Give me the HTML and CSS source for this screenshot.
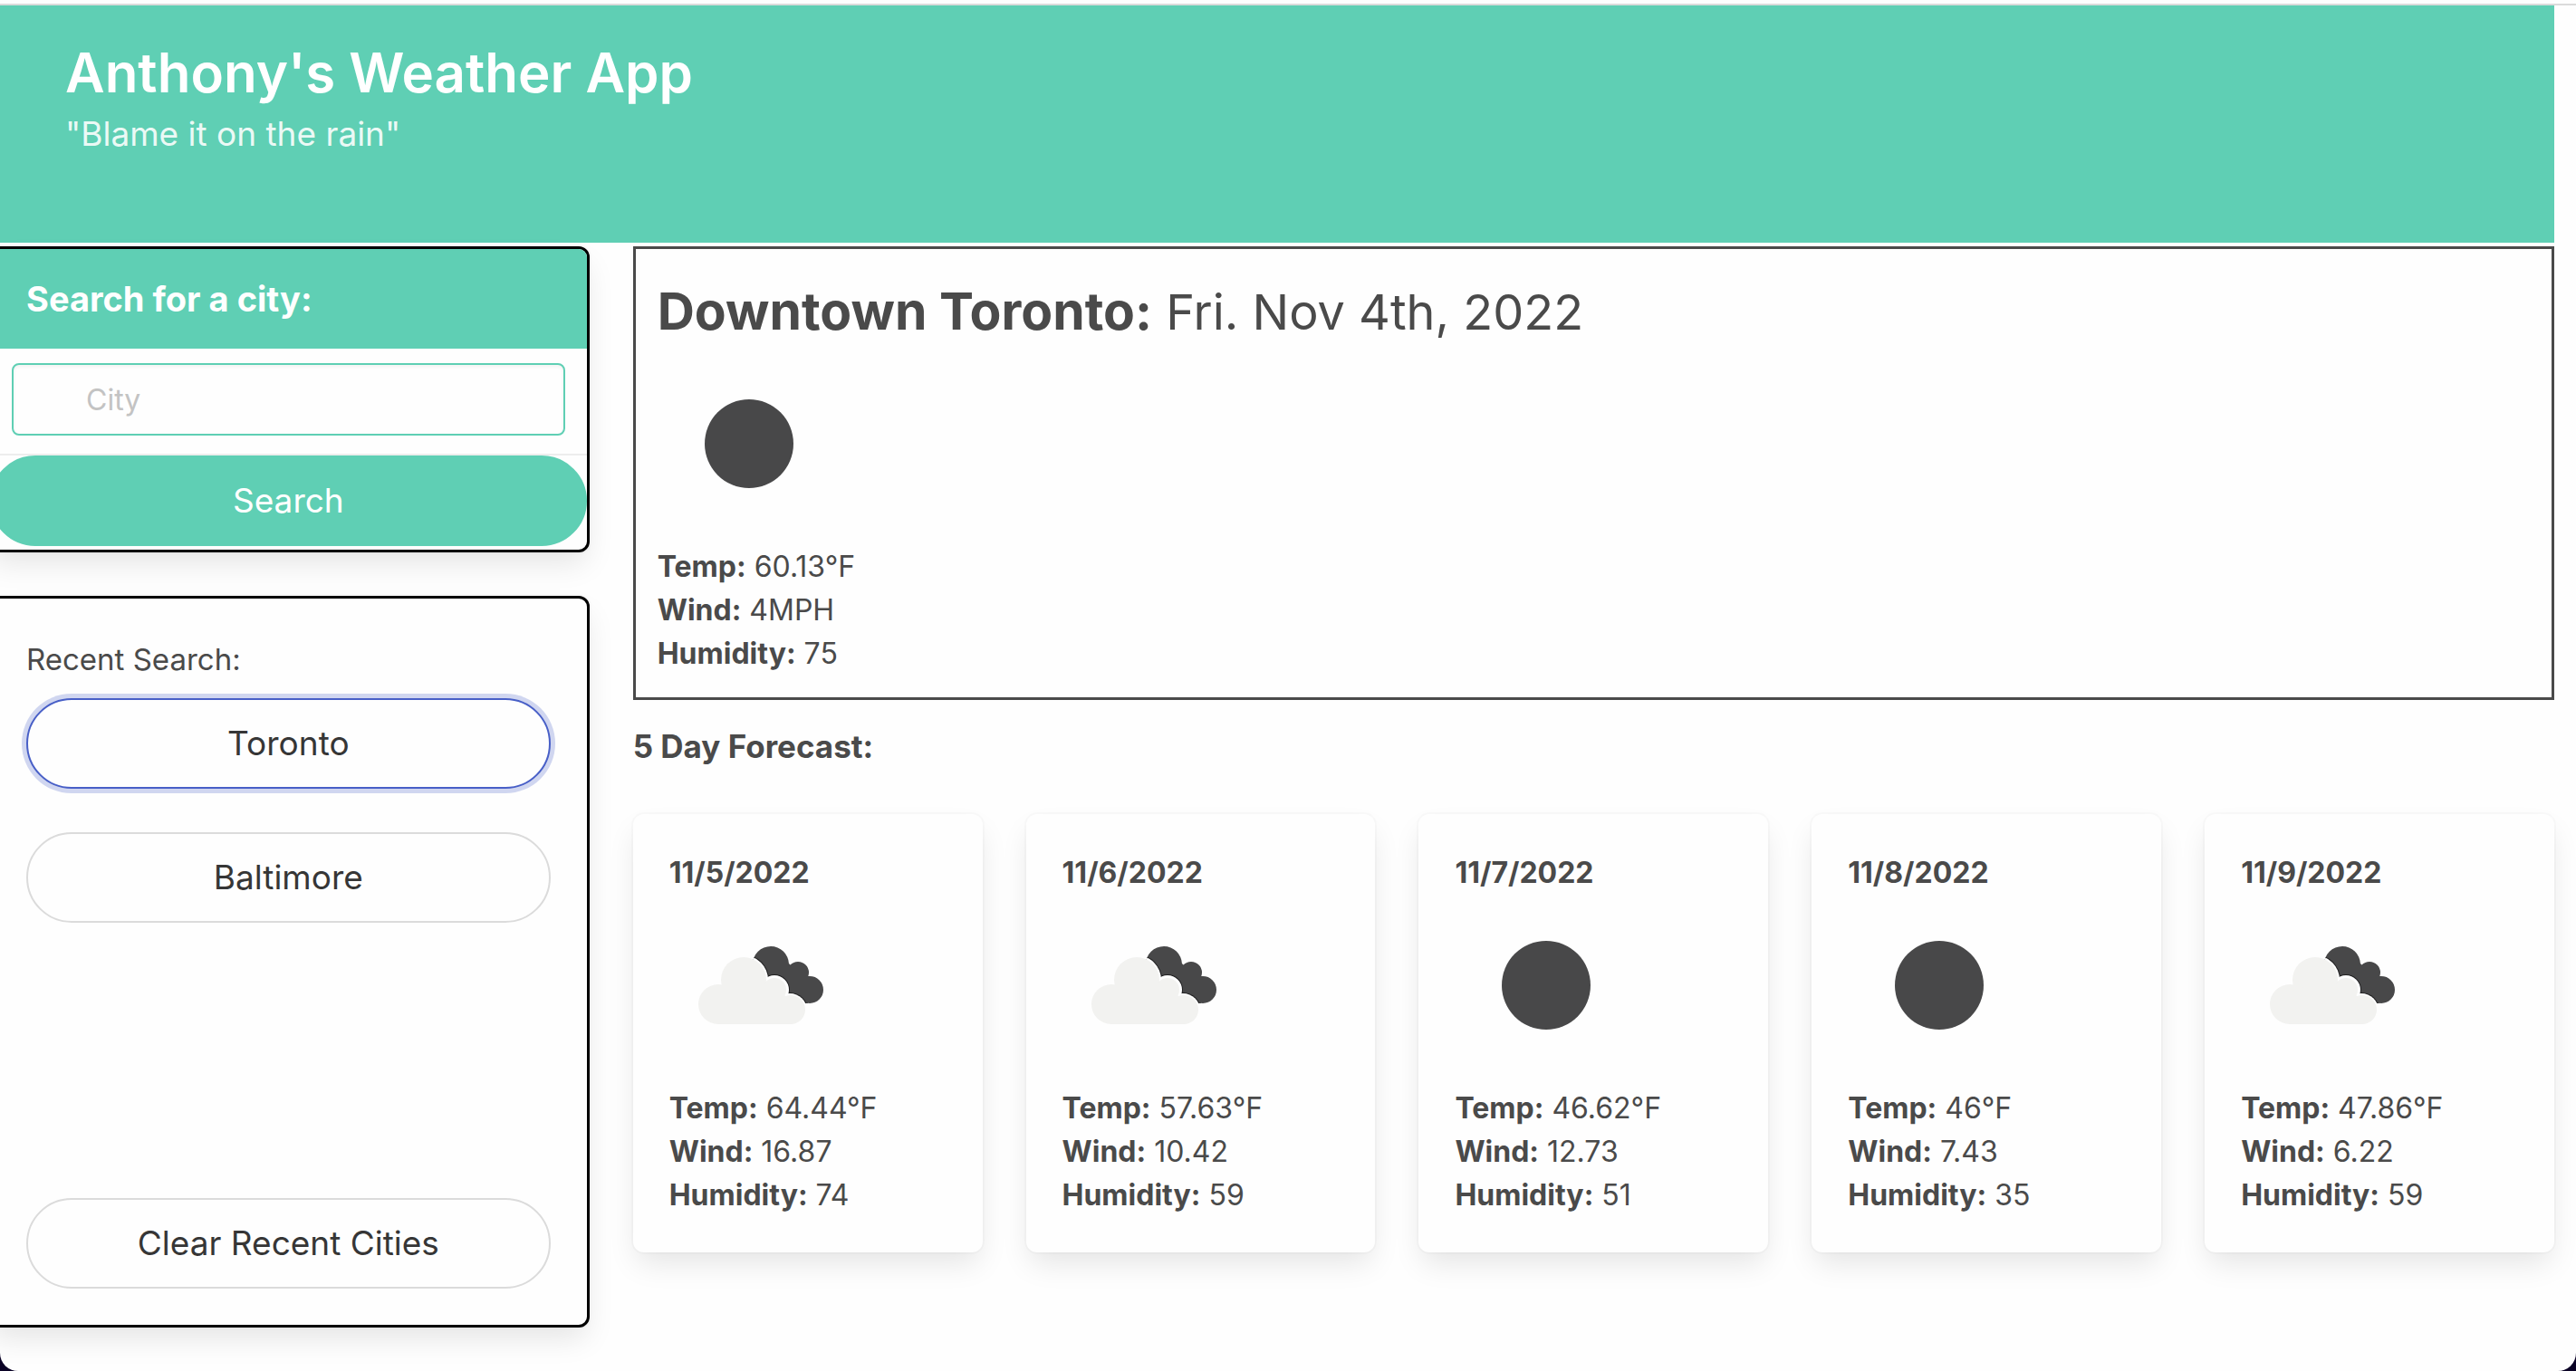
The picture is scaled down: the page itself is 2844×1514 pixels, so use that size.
FILE: index.html
```html
<!DOCTYPE html>
<html lang="en">
<head>
  <meta charset="utf-8">
  <meta name="viewport" content="width=device-width, initial-scale=1">
  <title>Anthony's Weather App</title>
  <link rel="stylesheet" href="styles.css">
</head>
<body>
  <svg class="sprite" aria-hidden="true">
    <defs>
      <clipPath id="back-cloud">
        <circle cx="112" cy="77" r="20"/>
        <circle cx="142" cy="86" r="12"/>
        <circle cx="155" cy="105" r="15"/>
        <path d="M112 77 126 70 142 86 155 105 153 120 145 120 120 110 100 88z"/>
      </clipPath>
      <symbol id="icon-clear" viewBox="0 0 200 200">
        <circle cx="101" cy="100" r="49" fill="#484849"/>
      </symbol>
      <symbol id="icon-clouds" viewBox="0 0 200 200">
        <g clip-path="url(#back-cloud)">
          <rect x="80" y="50" width="100" height="80" fill="#484849"/>
          <g fill="#1f1f20">
            <circle cx="82" cy="94" r="28"/>
            <circle cx="116" cy="105" r="17"/>
            <circle cx="133" cy="128" r="20"/>
          </g>
          <g fill="#fefefe">
            <circle cx="82" cy="94" r="27"/>
            <circle cx="116" cy="105" r="16"/>
            <circle cx="133" cy="128" r="19"/>
          </g>
        </g>
        <g fill="#f2f2f0">
          <circle cx="82" cy="94" r="25"/>
          <circle cx="54" cy="121" r="22"/>
          <circle cx="116" cy="105" r="13"/>
          <circle cx="134" cy="127" r="16"/>
          <path d="M54 143 54 112 82 94 116 100 134 118 134 143z"/>
        </g>
      </symbol>
    </defs>
  </svg>

  <div class="page">
    <header class="hero">
      <h1 class="hero-title">Anthony's Weather App</h1>
      <p class="hero-subtitle">"Blame it on the rain"</p>
    </header>

    <main class="layout">
      <aside class="sidebar">
        <form class="card search">
          <label class="search-title" for="city">Search for a city:</label>
          <div class="search-field">
            <input class="search-input" id="city" type="text" placeholder="City">
          </div>
          <button class="button button-primary" type="button">Search</button>
        </form>

        <section class="card recent">
          <h2 class="recent-title">Recent Search:</h2>
          <div class="recent-list">
            <button class="button is-focused" type="button">Toronto</button>
            <button class="button" type="button">Baltimore</button>
          </div>
          <button class="button" type="button">Clear Recent Cities</button>
        </section>
      </aside>

      <div class="content">
        <section class="current">
          <h2 class="current-title"><strong class="current-city">Downtown Toronto:</strong> Fri. Nov 4th, 2022</h2>
          <svg class="weather-icon" role="img" aria-label="Clear sky"><use href="#icon-clear"/></svg>
          <p><strong>Temp:</strong> 60.13°F</p>
          <p><strong>Wind:</strong> 4MPH</p>
          <p><strong>Humidity:</strong> 75</p>
        </section>

        <h2 class="forecast-title">5 Day Forecast:</h2>
        <div class="forecast">
          <article class="day">
            <h3 class="day-date">11/5/2022</h3>
            <svg class="weather-icon" role="img" aria-label="Broken clouds"><use href="#icon-clouds"/></svg>
            <p><strong>Temp:</strong> 64.44°F</p>
            <p><strong>Wind:</strong> 16.87</p>
            <p><strong>Humidity:</strong> 74</p>
          </article>
          <article class="day">
            <h3 class="day-date">11/6/2022</h3>
            <svg class="weather-icon" role="img" aria-label="Broken clouds"><use href="#icon-clouds"/></svg>
            <p><strong>Temp:</strong> 57.63°F</p>
            <p><strong>Wind:</strong> 10.42</p>
            <p><strong>Humidity:</strong> 59</p>
          </article>
          <article class="day">
            <h3 class="day-date">11/7/2022</h3>
            <svg class="weather-icon" role="img" aria-label="Clear sky"><use href="#icon-clear"/></svg>
            <p><strong>Temp:</strong> 46.62°F</p>
            <p><strong>Wind:</strong> 12.73</p>
            <p><strong>Humidity:</strong> 51</p>
          </article>
          <article class="day">
            <h3 class="day-date">11/8/2022</h3>
            <svg class="weather-icon" role="img" aria-label="Clear sky"><use href="#icon-clear"/></svg>
            <p><strong>Temp:</strong> 46°F</p>
            <p><strong>Wind:</strong> 7.43</p>
            <p><strong>Humidity:</strong> 35</p>
          </article>
          <article class="day">
            <h3 class="day-date">11/9/2022</h3>
            <svg class="weather-icon" role="img" aria-label="Broken clouds"><use href="#icon-clouds"/></svg>
            <p><strong>Temp:</strong> 47.86°F</p>
            <p><strong>Wind:</strong> 6.22</p>
            <p><strong>Humidity:</strong> 59</p>
          </article>
        </div>
      </div>
    </main>
  </div>
</body>
</html>
```
FILE: styles.css
```css
:root {
  --teal: #5fcfb4;
  --text: #4a4a4a;
  --surface: #fefefe;
  --shadow: 0 16px 32px -4px rgba(10, 10, 10, .1), 0 0 0 2px rgba(10, 10, 10, .02);
}

*, *::before, *::after { box-sizing: border-box; }

html { background: #0b0326; }

body {
  margin: 0;
  color: var(--text);
  font: 400 32px/48px Inter, "Liberation Sans", sans-serif;
}

h1, h2, h3, p { margin: 0; }

strong { font-weight: 700; }

.sprite { position: absolute; width: 0; height: 0; }

.page {
  min-height: 100vh;
  padding: 4px 24px 48px 0;
  overflow: hidden;
  background: var(--surface);
  border-radius: 0 0 20px 20px;
}

/* The rule runs past the page padding to the window's right edge. */
.page::before {
  content: "";
  display: block;
  height: 2px;
  margin-right: -24px;
  background: #dbdbdb;
}

.hero {
  min-height: 262px;
  padding: 36px 72px;
  color: #fff;
  background: var(--teal);
}

.hero-title {
  font-size: 60px;
  font-weight: 600;
  line-height: 76px;
}

.hero-subtitle {
  font-size: 37px;
  line-height: 60px;
  color: rgba(255, 255, 255, .9);
}

.layout {
  display: grid;
  grid-template-columns: 47fr 150fr;
  gap: 48px;
  align-items: start;
  margin: 4px 0 0 -14px;
}

.sidebar { display: grid; gap: 48px; }

.card {
  background: var(--surface);
  border: 3px solid #000;
  border-radius: 12px;
  box-shadow: var(--shadow);
}

.search { padding-bottom: 4px; }

.search-title {
  display: block;
  padding: 25px 40px;
  color: #fff;
  font-size: 38px;
  font-weight: 700;
  line-height: 60px;
  background: var(--teal);
  border-radius: 9px 9px 0 0;
}

.search-field {
  padding: 16px 24px 20px;
  border-bottom: 2px solid #ededed;
}

.search-input {
  display: block;
  width: 100%;
  height: 80px;
  padding: 0 80px;
  color: #363636;
  font: inherit;
  background: var(--surface);
  border: 2px solid var(--teal);
  border-radius: 8px;
  outline: 0;
  box-shadow: inset 0 2px 4px rgba(10, 10, 10, .05);
}

.search-input::placeholder { color: #c3c3c3; opacity: 1; }

.button {
  display: block;
  width: 100%;
  height: 100px;
  padding: 0 40px;
  color: #363636;
  font: 400 37px/60px Inter, "Liberation Sans", sans-serif;
  text-align: center;
  background: var(--surface);
  border: 2px solid #dbdbdb;
  border-radius: 50px;
  cursor: pointer;
}

.button-primary {
  color: #fff;
  background: var(--teal);
  border-color: var(--teal);
}

.is-focused {
  border-color: #485fc7;
  box-shadow: 0 0 0 5px rgba(72, 95, 199, .25);
}

.recent { padding: 40px; }

.recent-title {
  padding-bottom: 16px;
  font-size: 33px;
  font-weight: 400;
  line-height: 54px;
}

.recent-list {
  display: flex;
  flex-direction: column;
  gap: 48px;
  min-height: 504px;
  margin-bottom: 48px;
}

.current {
  padding: 24px;
  border: 3px solid var(--text);
}

.current-title {
  font-size: 54px;
  font-weight: 400;
  line-height: 90px;
}

.current-city { font-size: 57px; }

.weather-icon {
  display: block;
  width: 200px;
  height: 200px;
  margin-bottom: 12px;
}

.forecast-title {
  margin: 24px 0 48px;
  font-size: 35px;
  font-weight: 700;
  line-height: 54px;
}

.forecast {
  display: grid;
  grid-template-columns: repeat(5, 1fr);
  gap: 48px;
}

.day {
  padding: 41px 40px 39px;
  background: var(--surface);
  border-radius: 12px;
  box-shadow: var(--shadow);
}

.day-date { font-size: 32px; font-weight: 700; line-height: 48px; }
```
